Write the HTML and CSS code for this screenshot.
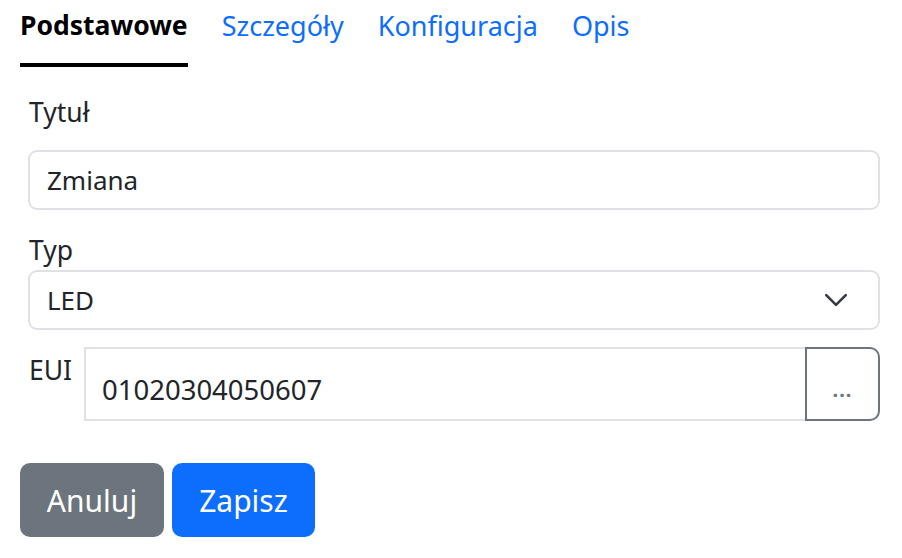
FILE: index.html
```html
<!DOCTYPE html>
<html lang="pl">
<head>
<meta charset="utf-8">
<title>Edycja</title>
<link rel="stylesheet" href="styles.css">
</head>
<body>
<div class="page">
  <nav class="tabs">
    <a class="tab active" href="#">Podstawowe</a>
    <a class="tab" href="#">Szczegóły</a>
    <a class="tab" href="#">Konfiguracja</a>
    <a class="tab" href="#">Opis</a>
  </nav>
  <form class="form">
    <div class="field field-title">
      <label class="label">Tytuł</label>
      <input class="control" type="text" value="Zmiana">
    </div>
    <div class="field field-type">
      <label class="label">Typ</label>
      <div class="control select">
        <span>LED</span>
        <svg class="chevron" width="26" height="26" viewBox="0 0 16 16"><path d="M2 5l6 6 6-6" fill="none" stroke="#343a40" stroke-width="1.6" stroke-linecap="round" stroke-linejoin="round"/></svg>
      </div>
    </div>
    <div class="eui-row">
      <label class="label eui-label">EUI</label>
      <div class="input-group">
        <input class="eui-input" type="text" value="01020304050607">
        <button class="eui-btn" type="button">...</button>
      </div>
    </div>
  </form>
  <div class="actions">
    <button class="btn btn-secondary" type="button">Anuluj</button>
    <button class="btn btn-primary" type="button">Zapisz</button>
  </div>
</div>
</body>
</html>
```
FILE: styles.css
```css
* { box-sizing: border-box; }
html, body { margin: 0; padding: 0; background: #fff; }
body {
  font-family: "Noto Sans", "Open Sans", sans-serif;
  color: #212529;
  font-size: 26px;
}
.page {
  padding: 0 22px 0 20px;
  width: 902px;
}
.tabs {
  display: flex;
  gap: 34px;
  padding-top: 6px;
}
.tab {
  font-size: 27px;
  line-height: 39px;
  padding-bottom: 18px;
  border-bottom: 4px solid transparent;
  color: #0d6efd;
  text-decoration: none;
}
.tab.active {
  color: #000;
  font-weight: 700;
  font-size: 26.5px;
  border-bottom-color: #000;
}
.form {
  padding: 0 0 0 8px;
  display: flex;
  flex-direction: column;
}
.label {
  display: block;
  font-size: 26.5px;
  line-height: 38px;
  padding-left: 1px;
}
.field-title { margin-top: 26px; }
.field-title .label { margin-bottom: 19px; }
.field-type { margin-top: 21px; }
.field-type .label { margin-bottom: 1px; }
.control {
  display: flex;
  align-items: center;
  width: 100%;
  height: 60px;
  border: 2px solid #dee2e6;
  border-radius: 9px;
  padding: 0 17px;
  font-family: inherit;
  font-size: 26px;
  color: #212529;
  background: #fff;
  outline: none;
}
.select { justify-content: space-between; padding-right: 29px; }
.chevron { display: block; }
.eui-row {
  margin-top: 17px;
  display: flex;
  align-items: flex-start;
}
.eui-label { width: 56px; flex: none; padding-top: 4px; }
.input-group {
  flex: 1;
  display: flex;
  height: 74px;
}
.eui-input {
  flex: 1;
  min-width: 0;
  height: 100%;
  border: 2px solid #dee2e6;
  border-right: none;
  border-radius: 0;
  padding: 10px 16px 0;
  font-family: inherit;
  font-size: 27.5px;
  color: #212529;
  outline: none;
}
.eui-btn {
  width: 75px;
  height: 100%;
  border: 2px solid #6c757d;
  border-radius: 0 10px 10px 0;
  background: #fff;
  color: #6c757d;
  font-family: inherit;
  font-size: 20px;
  font-weight: 700;
  padding: 10px 0 0;
  letter-spacing: 1px;
}
.actions {
  display: flex;
  gap: 8px;
  margin-top: 42px;
}
.btn {
  height: 74px;
  border: none;
  border-radius: 10px;
  padding: 0 26px;
  font-family: inherit;
  font-size: 30px;
  color: #fff;
}
.btn-secondary { background: #6c757d; width: 144px; }
.btn-primary { background: #0d6efd; width: 143px; }
```
